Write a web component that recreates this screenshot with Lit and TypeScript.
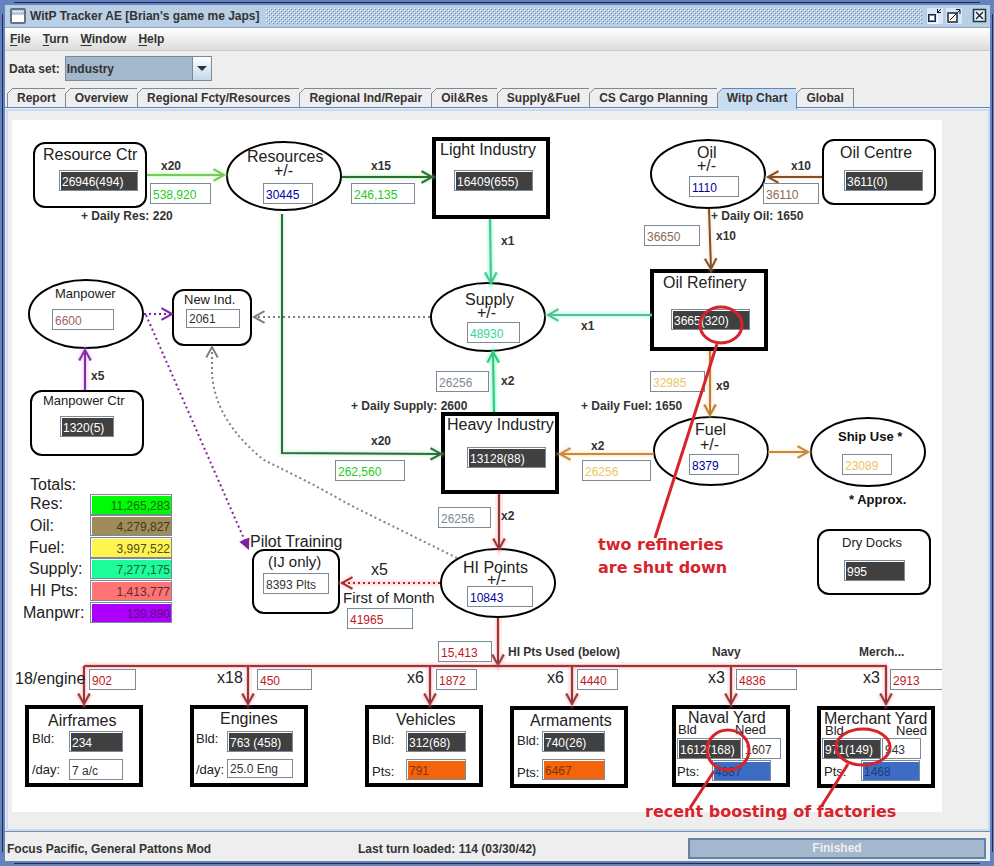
import { LitElement, html, svg, css } from "lit";
import { customElement, property, state } from "lit/decorators.js";
import { classMap } from "lit/directives/class-map.js";
import { styleMap } from "lit/directives/style-map.js";

type Point = [number, number];

/* The chart's data is kept in window coordinates; this is its top left corner. */
const ORIGIN = { x: 12, y: 120 };
const SIZE = { w: 930, h: 692 };

interface Shape { kind: "ellipse" | "round" | "box"; x: number; y: number; w: number; h: number }
interface Edge { points: Point[]; color: string; glow?: string; dotted?: boolean; head?: "open" | "solid" | "none"; path?: string }
interface Caption { text: string; x: number; y: number; size?: "s" | "m" | "l"; bold?: boolean; dark?: boolean; for?: string }
interface Field { value: string; label: string; x: number; y: number; w: number; tone: string; id?: string }

const ellipse = (cx: number, cy: number): Shape => ({ kind: "ellipse", x: cx - 57, y: cy - 34, w: 114, h: 68 });
const box = (x: number, y: number): Shape => ({ kind: "box", x, y, w: 114, h: 78 });
const round = (x: number, y: number, w = 112, h = 64): Shape => ({ kind: "round", x, y, w, h });

const SHAPES: Shape[] = [
  round(34, 143), ellipse(284, 176), box(434, 139), ellipse(708, 174), round(823, 140),
  box(652, 271), ellipse(86, 314), round(173, 290, 78, 55), ellipse(488, 317), round(31, 391),
  box(443, 414), ellipse(711, 451), ellipse(868, 452), round(253, 550, 86, 63), ellipse(498, 583),
  round(818, 530), box(27, 707), box(192, 707), box(367, 707), box(512, 708), box(674, 707), box(819, 708),
];

const GREY = "#808080";
const RED = "#903a3e";
const REDGLOW = "#ff7070";
const EDGES: Edge[] = [
  { points: [[147, 175], [224, 175]], color: "#7cc860", glow: "#a0ff80" },
  { points: [[342, 177], [432, 177]], color: "#2a7030", glow: "#90e890" },
  { points: [[490, 219], [491, 283]], color: "#4cc090", glow: "#30ffa0" },
  { points: [[282, 214], [282, 453], [441, 454]], color: "#306a40", glow: "#a0e8a8" },
  { points: [[652, 315], [548, 315]], color: "#58c098", glow: "#70ffc8" },
  { points: [[430, 317], [254, 317]], color: GREY, dotted: true },
  { points: [[822, 177], [768, 177]], color: "#80502c", glow: "#ffd0a0" },
  { points: [[709, 209], [711, 269]], color: "#80502c", glow: "#ffd0a0" },
  { points: [[710, 351], [710, 415]], color: "#b8803c", glow: "#ffc070" },
  { points: [[768, 452], [808, 452]], color: "#c88848", glow: "#ffd8a0" },
  { points: [[654, 454], [560, 454]], color: "#c88848", glow: "#ffd080" },
  { points: [[85, 390], [85, 350]], color: "#8030a0", glow: "#e080ff" },
  { points: [[144, 314], [172, 314]], color: "#8020a0", dotted: true },
  { points: [[146, 315], [248, 548]], color: "#8020a0", dotted: true, head: "solid" },
  { points: [[494, 412], [493, 352]], color: "#30c880", glow: "#20ff90" },
  { points: [[499, 494], [499, 549]], color: RED, glow: REDGLOW },
  { points: [[212, 372], [212, 347]], path: "M457 558L352 506L312 484L264 460Q214 420 212 372V348", color: GREY, dotted: true },
  { points: [[440, 583], [342, 583]], color: "#b02828", glow: "#ffb0b0", dotted: true },
  { points: [[498, 618], [498, 665]], color: RED, glow: REDGLOW },
  { points: [[84, 666], [887, 666]], color: RED, glow: REDGLOW, head: "none" },
  ...[84, 248, 430, 572, 731, 886].map((x): Edge => ({ points: [[x, 666], [x, 704]], color: RED, glow: REDGLOW })),
];

const CAPTIONS: Caption[] = [
  { text: "Resource Ctr", x: 43, y: 155, size: "l", for: "resource-ctr" },
  { text: "Resources", x: 247, y: 157, size: "l", for: "resources" },
  { text: "+/-", x: 274, y: 171, size: "l" },
  { text: "Light Industry", x: 440, y: 150, size: "l", for: "light" },
  { text: "Oil", x: 697, y: 153, size: "l", for: "oil" },
  { text: "+/-", x: 697, y: 166, size: "l" },
  { text: "Oil Centre", x: 840, y: 153, size: "l", for: "oil-centre" },
  { text: "Oil Refinery", x: 663, y: 283, size: "l", for: "refinery" },
  { text: "Manpower", x: 55, y: 294, for: "manpower" },
  { text: "New Ind.", x: 184, y: 300, for: "new-ind" },
  { text: "Supply", x: 465, y: 300, size: "l", for: "supply" },
  { text: "+/-", x: 477, y: 313, size: "l" },
  { text: "Manpower Ctr", x: 43, y: 401, for: "manpower-ctr" },
  { text: "Heavy Industry", x: 447, y: 425, size: "l", for: "heavy" },
  { text: "Fuel", x: 695, y: 430, size: "l", for: "fuel" },
  { text: "+/-", x: 700, y: 445, size: "l" },
  { text: "Ship Use *", x: 838, y: 437, bold: true, dark: true, for: "ship-use" },
  { text: "* Approx.", x: 849, y: 500, bold: true, dark: true },
  { text: "Dry Docks", x: 842, y: 543, for: "docks" },
  { text: "Totals:", x: 30, y: 485, size: "l" },
  { text: "Res:", x: 30, y: 504, size: "l", for: "t-res" },
  { text: "Oil:", x: 30, y: 526, size: "l", for: "t-oil" },
  { text: "Fuel:", x: 29, y: 548, size: "l", for: "t-fuel" },
  { text: "Supply:", x: 29, y: 569, size: "l", for: "t-supply" },
  { text: "HI Pts:", x: 30, y: 591, size: "l", for: "t-hi" },
  { text: "Manpwr:", x: 23, y: 613, size: "l", for: "t-man" },
  { text: "Pilot Training", x: 250, y: 542, size: "l", for: "pilots" },
  { text: "(IJ only)", x: 268, y: 562, size: "m" },
  { text: "x5", x: 371, y: 570, size: "l" },
  { text: "First of Month", x: 343, y: 598, size: "m" },
  { text: "HI Points", x: 463, y: 568, size: "l", for: "hi" },
  { text: "+/-", x: 487, y: 580, size: "l" },
  { text: "18/engine", x: 15, y: 679, size: "l" },
  { text: "x18", x: 217, y: 678, size: "l" },
  { text: "x6", x: 407, y: 678, size: "l" },
  { text: "x6", x: 547, y: 678, size: "l" },
  { text: "x3", x: 708, y: 678, size: "l" },
  { text: "x3", x: 863, y: 678, size: "l" },
  { text: "Airframes", x: 48, y: 721, size: "l" },
  { text: "Bld:", x: 32, y: 739, for: "air-bld" },
  { text: "/day:", x: 32, y: 770, for: "air-day" },
  { text: "Engines", x: 220, y: 719, size: "l" },
  { text: "Bld:", x: 196, y: 739, for: "eng-bld" },
  { text: "/day:", x: 196, y: 770, for: "eng-day" },
  { text: "Vehicles", x: 396, y: 720, size: "l" },
  { text: "Bld:", x: 372, y: 740, for: "veh-bld" },
  { text: "Pts:", x: 372, y: 772, for: "veh-pts" },
  { text: "Armaments", x: 530, y: 721, size: "l" },
  { text: "Bld:", x: 517, y: 741, for: "arm-bld" },
  { text: "Pts:", x: 517, y: 773, for: "arm-pts" },
  { text: "Naval Yard", x: 688, y: 718, size: "l" },
  { text: "Bld", x: 678, y: 730, for: "nav-bld" },
  { text: "Need", x: 735, y: 730, for: "nav-need" },
  { text: "Pts:", x: 677, y: 772, for: "nav-pts" },
  { text: "Merchant Yard", x: 824, y: 719, size: "l" },
  { text: "Bld", x: 825, y: 731, for: "mer-bld" },
  { text: "Need", x: 896, y: 731, for: "mer-need" },
  { text: "Pts:", x: 824, y: 772, for: "mer-pts" },
  ...([
    ["x20", 161, 166], ["x15", 371, 166], ["x10", 791, 166], ["x1", 501, 241], ["x10", 716, 236],
    ["x1", 581, 326], ["x5", 91, 376], ["x2", 501, 381], ["x9", 716, 386], ["x20", 371, 441],
    ["x2", 591, 446], ["x2", 501, 516], ["+ Daily Res: 220", 81, 216], ["+ Daily Oil: 1650", 711, 216],
    ["+ Daily Supply: 2600", 351, 406], ["+ Daily Fuel: 1650", 581, 406],
    ["HI Pts Used (below)", 508, 652], ["Navy", 712, 652], ["Merch...", 859, 652],
  ] as [string, number, number][]).map(([text, x, y]): Caption => ({ text, x, y, size: "s", bold: true })),
];

const field = (value: string, label: string, x: number, y: number, w: number, tone: string, id?: string): Field =>
  ({ value, label, x, y, w, tone, id });

const FIELDS: Field[] = [
  field("26946(494)", "", 59, 170, 79, "solid", "resource-ctr"),
  field("538,920", "Resources produced", 150, 183, 61, "green"),
  field("30445", "", 263, 183, 50, "blue", "resources"),
  field("246,135", "Resources to light industry", 351, 183, 64, "green"),
  field("16409(655)", "", 454, 170, 79, "solid", "light"),
  field("1110", "", 689, 176, 50, "blue", "oil"),
  field("36110", "Oil produced", 763, 183, 56, "brown"),
  field("3611(0)", "", 844, 170, 79, "solid", "oil-centre"),
  field("36650", "Oil refined", 644, 225, 56, "brown"),
  field("3665(320)", "", 671, 309, 79, "solid", "refinery"),
  field("6600", "", 52, 309, 62, "rose", "manpower"),
  field("2061", "", 186, 309, 54, "plain short", "new-ind"),
  field("48930", "", 467, 322, 53, "teal", "supply"),
  field("1320(5)", "", 60, 416, 54, "solid", "manpower-ctr"),
  field("26256", "Supply from heavy industry", 436, 371, 53, "grey"),
  field("32985", "Fuel refined", 650, 371, 55, "amber"),
  field("262,560", "Resources to heavy industry", 335, 460, 70, "green"),
  field("13128(88)", "", 467, 447, 79, "solid", "heavy"),
  field("26256", "Fuel to heavy industry", 582, 460, 69, "amber"),
  field("8379", "", 689, 454, 50, "blue", "fuel"),
  field("23089", "", 842, 454, 50, "amber", "ship-use"),
  field("26256", "HI points produced", 438, 507, 53, "grey"),
  field("10843", "", 467, 586, 66, "blue", "hi"),
  field("8393 Plts", "", 263, 573, 66, "plain", "pilots"),
  field("41965", "Pilot training cost", 347, 608, 66, "red"),
  field("995", "", 844, 560, 61, "solid", "docks"),
  field("15,413", "HI points used", 438, 641, 54, "red"),
  field("902", "Airframes cost", 89, 669, 47, "red"),
  field("450", "Engines cost", 257, 669, 55, "red"),
  field("1872", "Vehicles cost", 436, 669, 41, "red"),
  field("4440", "Armaments cost", 577, 669, 41, "red"),
  field("4836", "Naval yard cost", 736, 669, 61, "red"),
  field("2913", "Merchant yard cost", 890, 669, 61, "red"),
  field("234", "", 69, 731, 54, "solid", "air-bld"),
  field("7 a/c", "", 69, 759, 54, "plain", "air-day"),
  field("763 (458)", "", 227, 731, 66, "solid", "eng-bld"),
  field("25.0 Eng", "", 227, 759, 66, "plain short", "eng-day"),
  field("312(68)", "", 406, 731, 60, "solid", "veh-bld"),
  field("791", "", 406, 759, 60, "orange", "veh-pts"),
  field("740(26)", "", 542, 731, 63, "solid", "arm-bld"),
  field("6467", "", 542, 759, 63, "orange", "arm-pts"),
  field("1612(168)", "", 677, 738, 64, "solid", "nav-bld"),
  field("1607", "", 742, 738, 39, "plain", "nav-need"),
  field("4887", "", 712, 760, 59, "navy", "nav-pts"),
  field("971(149)", "", 822, 738, 59, "solid", "mer-bld"),
  field("943", "", 882, 738, 39, "plain", "mer-need"),
  field("1468", "", 861, 760, 59, "navy", "mer-pts"),
  field("11,265,283", "", 90, 494, 82, "total t-res", "t-res"),
  field("4,279,827", "", 90, 515, 82, "total t-oil", "t-oil"),
  field("3,997,522", "", 90, 537, 82, "total t-fuel", "t-fuel"),
  field("7,277,175", "", 90, 558, 82, "total t-supply", "t-supply"),
  field("1,413,777", "", 90, 580, 82, "total t-hi", "t-hi"),
  field("139,890", "", 90, 602, 82, "total t-man", "t-man"),
];

@customElement("industry-chart")
export class IndustryChart extends LitElement {
  static styles = css`
    :host { display: block; position: relative; background: #fff; font-weight: 400; }
    .stage { position: relative; overflow: hidden; width: 100%; height: 100%; }
    .art, .notes { position: absolute; inset: 0; display: block; width: 100%; height: 100%; fill: none; }
    .notes { overflow: visible; pointer-events: none; stroke: #d6242c; stroke-width: 3; }
    .node { fill: #fff; stroke: #000; stroke-width: 2; }
    .node.thick { stroke-width: 4; }
    .wide { stroke-width: 8; opacity: 0.12; }
    .mid { stroke-width: 4; opacity: 0.3; }
    .line { stroke-width: 2; }
    .dotted { stroke-dasharray: 2 3; }
    .caption {
      position: absolute; white-space: nowrap; line-height: 12px; font-size: 13px; color: #222;
    }
    .caption.s { font-size: 12px; color: #333; }
    .caption.m { font-size: 15px; }
    .caption.l { font-size: 16px; }
    .caption.bold { font-weight: 700; }
    .caption.dark { color: #111; }
    .field {
      position: absolute; box-sizing: border-box; height: 21px; margin: 0; padding: 2px 1px 0 2px;
      border: 1px solid #7a8a99; border-radius: 0; background: #fff; color: #333; outline: none;
      font: 12px/16px "Liberation Sans", Arial, sans-serif;
    }
    .short { height: 19px; padding-top: 1px; }
    .solid { background: #404040; color: #fff; box-shadow: inset 1px 1px #fff; }
    .green { color: #2c2; }
    .blue { color: #0000a0; }
    .brown { color: #8c6a50; }
    .rose { color: #966; }
    .teal { color: #30d898; }
    .grey { color: #808890; }
    .amber { color: #ecc464; }
    .red { color: #c01820; }
    .orange { background: #f4640c; color: #7c3408; box-shadow: inset 1px 1px #fff; }
    .navy { background: #3c6cc4; color: #203c74; box-shadow: inset 1px 1px #fff; }
    .total { text-align: right; box-shadow: inset 1px 1px #fff; }
    .t-res { background: #00fc04; color: #146414; }
    .t-oil { background: #a08c58; color: #403820; }
    .t-fuel { background: #fff450; color: #504c20; }
    .t-supply { background: #1cfc98; color: #106040; }
    .t-hi { background: #ff7474; color: #602c2c; }
    .t-man { background: #ac00fc; color: #5c1080; }
    .note {
      position: absolute; margin: 0; white-space: nowrap; color: #d6242c;
      font: bold 16px/23px "DejaVu Sans", Verdana, sans-serif;
    }
  `;

  private at(x: number, y: number) {
    return { left: `${x - ORIGIN.x}px`, top: `${y - ORIGIN.y}px` };
  }

  private shape(s: Shape) {
    if (s.kind === "ellipse")
      return svg`<ellipse class="node" cx=${s.x + s.w / 2} cy=${s.y + s.h / 2} rx=${s.w / 2} ry=${s.h / 2} />`;
    return svg`<rect class=${s.kind === "box" ? "node thick" : "node"} x=${s.x} y=${s.y} width=${s.w}
      height=${s.h} rx=${s.kind === "round" ? 11 : 0} />`;
  }

  private edge(e: Edge) {
    const d = e.path ?? "M" + e.points.map((p) => p.join(" ")).join("L");
    const [from, tip] = e.points.slice(-2);
    const angle = Math.atan2(tip[1] - from[1], tip[0] - from[0]);
    const wing = (turn: number, len: number) =>
      `${tip[0] - len * Math.cos(angle + turn)} ${tip[1] - len * Math.sin(angle + turn)}`;
    const solid = e.head === "solid";
    const head =
      e.head === "none" ? "" : solid ? `M${wing(0.45, 9)}L${tip.join(" ")}L${wing(-0.45, 9)}Z`
        : `M${wing(0.5, 12)}L${tip.join(" ")}L${wing(-0.5, 12)}`;
    return svg`<g stroke=${e.color}>
      ${e.glow ? svg`<path class="wide" stroke=${e.glow} d=${d + head} /><path class="mid" stroke=${e.glow} d=${d + head} />` : ""}
      <path class=${e.dotted ? "line dotted" : "line"} d=${d} />
      <path class="line" fill=${solid ? e.color : "none"} d=${head} />
    </g>`;
  }

  private caption(c: Caption) {
    const cls = classMap({ caption: true, [c.size ?? "base"]: true, bold: !!c.bold, dark: !!c.dark });
    const style = styleMap(this.at(c.x, c.y - 6));
    return c.for
      ? html`<label class=${cls} style=${style} for=${c.for}>${c.text}</label>`
      : html`<span class=${cls} style=${style}>${c.text}</span>`;
  }

  private field(f: Field) {
    const style = styleMap({ ...this.at(f.x, f.y), width: `${f.w}px` });
    return f.id
      ? html`<input class="field ${f.tone}" style=${style} id=${f.id} readonly .value=${f.value} />`
      : html`<input class="field ${f.tone}" style=${style} aria-label=${f.label} readonly .value=${f.value} />`;
  }

  render() {
    const view = `${ORIGIN.x} ${ORIGIN.y} ${SIZE.w} ${SIZE.h}`;
    return html`
      <div class="stage">
        <svg class="art" viewBox=${view} aria-hidden="true">
          ${SHAPES.map((s) => this.shape(s))} ${EDGES.map((e) => this.edge(e))}
        </svg>
        ${FIELDS.map((f) => this.field(f))} ${CAPTIONS.map((c) => this.caption(c))}
      </div>
      <svg class="notes" viewBox=${view} aria-hidden="true">
        <ellipse cx="721" cy="325" rx="21" ry="18" />
        <path d="M717 344L655 538" />
        <ellipse cx="728" cy="750" rx="21" ry="20" />
        <path d="M714 771L690 808" />
        <ellipse cx="863" cy="747" rx="27" ry="18" />
        <path d="M848 764L821 807" />
      </svg>
      <p class="note" style=${styleMap(this.at(598, 533))}>two refineries<br />are shut down</p>
      <p class="note" style=${styleMap(this.at(645, 800))}>recent boosting of factories</p>
    `;
  }
}

@customElement("title-bar")
export class TitleBar extends LitElement {
  @property() caption = "";

  static styles = css`
    :host {
      display: flex; align-items: center; height: 22px; padding: 0 2px 0 5px;
      background: #b8cfe5; border-bottom: 1px solid #8ea6c4;
    }
    h1 { margin: 0 6px 0 4px; font-size: 12px; line-height: 16px; white-space: nowrap; }
    .grip {
      flex: 1; height: 16px; margin-right: 5px;
      background-image:
        conic-gradient(at 1px 1px, transparent 75%, #fff 0), conic-gradient(at 1px 1px, transparent 75%, #fff 0),
        conic-gradient(at 1px 1px, transparent 75%, #6382bf 0), conic-gradient(at 1px 1px, transparent 75%, #6382bf 0);
      background-size: 4px 4px;
      background-position: 0 0, 2px 2px, 1px 1px, 3px 3px;
    }
    button { display: block; width: 16px; height: 16px; margin: 0; padding: 0; border: 0; background: none; }
    .gap { margin-left: 3px; }
    .gap-wide { margin-left: 10px; }
    svg { display: block; }
  `;

  render() {
    return html`
      <svg width="16" height="16" viewBox="0 0 16 16" aria-hidden="true">
        <rect x="1" y="1" width="14" height="14" rx="1" fill="#fff" stroke="#667080" stroke-width="2" />
        <path d="M2 2h12v4H2z" fill="#b8cfe5" />
        <path d="M3 3.5h10M4 5.5h8" stroke="#fff" stroke-dasharray="1 1" />
        <path d="M2 6h12" stroke="#99a" />
      </svg>
      <h1>${this.caption}</h1>
      <div class="grip"></div>
      <button aria-label="Minimize">
        <svg width="16" height="16" viewBox="0 0 16 16" shape-rendering="crispEdges">
          <rect width="16" height="16" fill="#d8e8f8" />
          <path d="M1 6h8v8H1z" fill="#223" />
          <path d="M2 7h6v6H2z" fill="#6382bf" />
          <path d="M3 8h4v4H3z" fill="#fff" />
          <path d="M2 15h8V7" fill="none" stroke="#fff" />
          <path d="M10 1h1v3h3v1h-4zM11 3h1v-1h1v-1h1v1h-1v1h-1v1h-1z" fill="#112" />
        </svg>
      </button>
      <button class="gap" aria-label="Maximize">
        <svg width="16" height="16" viewBox="0 0 16 16">
          <rect width="16" height="16" fill="#d8e8f8" />
          <rect x="2" y="5" width="9" height="9" fill="#fff" stroke="#223" stroke-width="1.5" />
          <path d="M4 12L14 2M10 1.5h4V6" fill="none" stroke="#112" />
        </svg>
      </button>
      <button class="gap-wide" aria-label="Close">
        <svg width="16" height="16" viewBox="0 0 16 16">
          <rect x="1.5" y="1.5" width="12" height="12" fill="#e4eef8" stroke="#234" stroke-width="1.5" />
          <path d="M4 4l7 7M11 4l-7 7" fill="none" stroke="#fff" stroke-width="3" />
          <path d="M4 4l7 7M11 4l-7 7" fill="none" stroke="#223" stroke-width="1.5" />
        </svg>
      </button>
    `;
  }
}

@customElement("app-root")
export class AppRoot extends LitElement {
  @state() private tab = "Witp Chart";

  private tabs = [
    "Report", "Overview", "Regional Fcty/Resources", "Regional Ind/Repair", "Oil&Res",
    "Supply&Fuel", "CS Cargo Planning", "Witp Chart", "Global",
  ];

  static styles = css`
    :host {
      display: flex; flex-direction: column; box-sizing: border-box; min-height: 100vh; padding: 5px 4px 5px 5px;
      font: bold 12px/16px "Liberation Sans", Arial, sans-serif; color: #333;
      background:
        linear-gradient(#222c48, #222c48) 14px 2px / calc(100% - 28px) 1px no-repeat,
        linear-gradient(#222c48, #222c48) 14px calc(100% - 2px) / calc(100% - 28px) 1px no-repeat,
        linear-gradient(#222c48, #222c48) 2px 14px / 1px calc(100% - 28px) no-repeat,
        linear-gradient(#222c48, #222c48) calc(100% - 1px) 14px / 1px calc(100% - 28px) no-repeat,
        #6382bf;
    }
    nav {
      display: flex; align-items: center; gap: 12px; height: 22px; padding-left: 5px;
      background: linear-gradient(#fff, #dcdcdc); border-bottom: 1px solid #ccc;
    }
    nav button { margin: 0; padding: 0; border: 0; background: none; font: inherit; color: inherit; }
    nav u { text-underline-offset: 2px; }
    .body { flex: 1; display: flex; flex-direction: column; background: #eee; }
    .picker { display: flex; align-items: center; gap: 5px; padding: 5px 4px 7px; }
    .combo { display: grid; width: 147px; }
    .combo > * { grid-area: 1 / 1; }
    select {
      appearance: none; height: 25px; margin: 0; padding: 0 22px 0 1px; border: 1px solid #7a8a99;
      border-radius: 0; background: #a3b8cc; color: inherit; font: inherit;
    }
    .arrow {
      justify-self: end; width: 18px; height: 23px; margin: 1px 1px 0 0; border-left: 1px solid #7a8a99;
      background: linear-gradient(#fff, #c4d8ec); pointer-events: none;
    }
    .tabs { display: flex; height: 19px; padding-left: 2px; border-bottom: 1px solid #6382bf; }
    .tab {
      position: relative; margin: 0; padding: 0 9px; border: solid #7a8a99; border-width: 1px 1px 0 0;
      background: #eee; color: inherit; font: inherit; white-space: nowrap;
    }
    .tab:first-child { border-left-width: 1px; }
    .tab::before {
      content: ""; position: absolute; left: -1px; top: -1px; width: 6px; height: 6px;
      background: linear-gradient(135deg, #eee 44%, #7a8a99 45% 56%, transparent 57%);
    }
    .tab.on { background: #c8ddf2; border-color: #6382bf; margin-bottom: -2px; padding-bottom: 2px; }
    .panel {
      flex: 1; margin: 1px 0 0 1px; padding: 9px 44px 15px 4px; border: solid #c8ddf2; border-width: 2px;
      background: #eee;
    }
    .chart { width: 930px; height: 692px; }
    footer {
      display: grid; grid-template-columns: 351fr 330fr 298fr; align-items: center; padding: 6px 4px 2px 2px;
      border-top: 1px solid #7a8aa9; background: #eee;
    }
    .progress {
      padding: 1px; border: 2px solid #6382a8; line-height: 15px; height: 15px;
      background: #a3b8cc; color: #eee; text-align: center;
    }
  `;

  render() {
    const menus = ["File", "Turn", "Window", "Help"];
    return html`
      <title-bar caption="WitP Tracker AE [Brian's game me Japs]"></title-bar>
      <nav>${menus.map((m) => html`<button><u>${m[0]}</u>${m.slice(1)}</button>`)}</nav>
      <main class="body">
        <div class="picker">
          <label for="set">Data set:</label>
          <div class="combo">
            <select id="set"><option>Industry</option></select>
            <svg class="arrow" viewBox="0 0 18 23" aria-hidden="true"><path d="M4 9h10l-5 5z" fill="#333" /></svg>
          </div>
        </div>
        <div class="tabs" role="tablist">
          ${this.tabs.map((t) => html`
            <button class=${classMap({ tab: true, on: t === this.tab })} role="tab"
              aria-selected=${t === this.tab} @click=${() => (this.tab = t)}>${t}</button>`)}
        </div>
        <section class="panel"><industry-chart class="chart"></industry-chart></section>
      </main>
      <footer>
        <span>Focus Pacific, General Pattons Mod</span>
        <span>Last turn loaded: 114 (03/30/42)</span>
        <div class="progress" role="progressbar" aria-valuenow="100">Finished</div>
      </footer>
    `;
  }
}
